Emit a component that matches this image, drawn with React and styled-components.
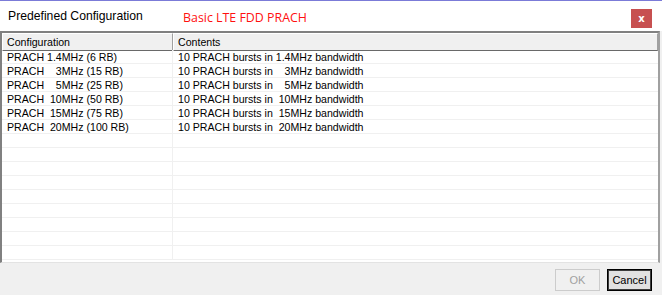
import React from "react";
import styled, { createGlobalStyle } from "styled-components";

const GlobalStyle = createGlobalStyle`
  html, body {
    margin: 0;
    padding: 0;
    background: #f0f0f0;
  }
  body {
    font-family: "Liberation Sans", Arial, sans-serif;
  }
`;

const rows = [
  ["PRACH 1.4MHz (6 RB)", "10 PRACH bursts in 1.4MHz bandwidth"],
  ["PRACH    3MHz (15 RB)", "10 PRACH bursts in    3MHz bandwidth"],
  ["PRACH    5MHz (25 RB)", "10 PRACH bursts in    5MHz bandwidth"],
  ["PRACH  10MHz (50 RB)", "10 PRACH bursts in  10MHz bandwidth"],
  ["PRACH  15MHz (75 RB)", "10 PRACH bursts in  15MHz bandwidth"],
  ["PRACH  20MHz (100 RB)", "10 PRACH bursts in  20MHz bandwidth"],
];

const EMPTY_ROWS = 9;

const Dialog = styled.div`
  width: 662px;
  height: 295px;
  display: flex;
  flex-direction: column;
  background: #f0f0f0;
  border-top: 1px solid #7b7bd8;
  box-sizing: border-box;
  overflow: hidden;
`;

const TitleBar = styled.div`
  height: 30px;
  display: flex;
  align-items: center;
  background: #fff;
  padding: 0 10px 0 8px;
  flex-shrink: 0;
`;

const Title = styled.div`
  font-family: "Liberation Sans", Arial, sans-serif;
  font-size: 12.2px;
  color: #000;
  width: 175px;
`;

const Subtitle = styled.div`
  font-family: "Open Sans", "Segoe UI", sans-serif;
  font-size: 12.4px;
  color: #ff1010;
  flex: 1;
  padding-top: 2px;
`;

const CloseButton = styled.button`
  width: 21px;
  height: 19px;
  margin-top: 5px;
  border: none;
  background: #c75050;
  color: #fff;
  font-family: "DejaVu Sans", sans-serif;
  font-weight: bold;
  font-size: 10px;
  line-height: 19px;
  padding: 0 0 2px;
`;

const Grid = styled.div`
  height: 232px;
  width: 660px;
  box-sizing: border-box;
  border-top: 2px solid #808080;
  border-left: 2px solid #808080;
  border-right: 2px solid #a0a0a0;
  border-bottom: 1px solid #e3e3e3;
  background: #fff;
  display: flex;
  flex-direction: column;
  overflow: hidden;
  flex-shrink: 0;
`;

const HeaderRow = styled.div`
  display: grid;
  grid-template-columns: 171px 1fr;
  height: 17px;
  flex-shrink: 0;
`;

const HeaderCell = styled.div`
  background: #f0f0f0;
  border-top: 1px solid #fff;
  border-left: 1px solid #fff;
  border-right: 1px solid #a0a0a0;
  border-bottom: 1px solid #696969;
  box-sizing: border-box;
  font-size: 10.6px;
  line-height: 16px;
  padding-left: 4px;
  color: #000;
`;

const Row = styled.div`
  display: grid;
  grid-template-columns: 171px 1fr;
  height: 14px;
  flex-shrink: 0;
  border-bottom: 1px solid #f0f0f0;
  box-sizing: border-box;
`;

const Cell = styled.div`
  font-size: 10.6px;
  line-height: 14px;
  white-space: pre;
  padding-left: 5px;
  color: #000;
  border-right: ${(p) => (p.$last ? "none" : "1px solid #f0f0f0")};
`;

const Footer = styled.div`
  flex: 1;
  display: flex;
  justify-content: flex-end;
  align-items: flex-start;
  gap: 7px;
  padding: 6px 10px 0 0;
`;

const Button = styled.button`
  width: 45px;
  height: 22px;
  box-sizing: border-box;
  font-family: "Liberation Sans", Arial, sans-serif;
  font-size: 11px;
  padding: 0;
  background: ${(p) => (p.$disabled ? "#f0f0f0" : "#e1e1e1")};
  color: ${(p) => (p.$disabled ? "#a0a0a0" : "#000")};
  border: 1px solid ${(p) => (p.$disabled ? "#cccccc" : "#000")};
  box-shadow: ${(p) => (p.$default ? "inset 0 0 0 1px #3c3c3c" : "none")};
`;

export default function App() {
  return (
    <>
      <GlobalStyle />
      <Dialog>
        <TitleBar>
          <Title>Predefined Configuration</Title>
          <Subtitle>Basic LTE FDD PRACH</Subtitle>
          <CloseButton>x</CloseButton>
        </TitleBar>
        <Grid>
          <HeaderRow>
            <HeaderCell>Configuration</HeaderCell>
            <HeaderCell>Contents</HeaderCell>
          </HeaderRow>
          {rows.map(([config, contents]) => (
            <Row key={config}>
              <Cell>{config}</Cell>
              <Cell $last>{contents}</Cell>
            </Row>
          ))}
          {Array.from({ length: EMPTY_ROWS }).map((_, i) => (
            <Row key={"empty" + i}>
              <Cell />
              <Cell $last />
            </Row>
          ))}
        </Grid>
        <Footer>
          <Button $disabled>OK</Button>
          <Button $default>Cancel</Button>
        </Footer>
      </Dialog>
    </>
  );
}
